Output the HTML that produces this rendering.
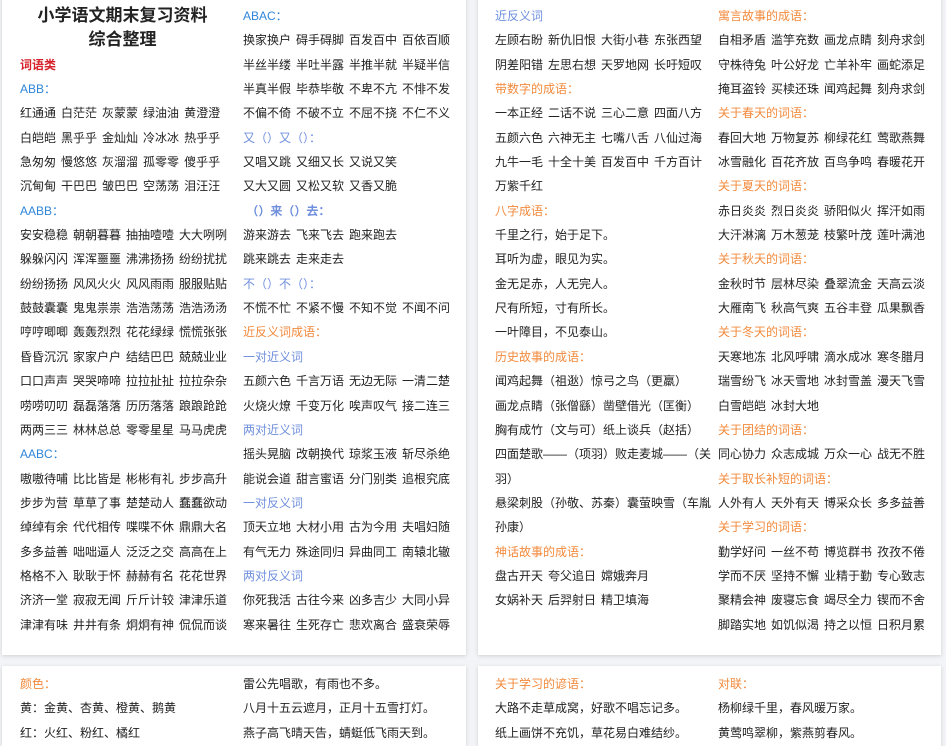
<!DOCTYPE html>
<html><head><meta charset="utf-8"><style>
body{margin:0;width:946px;height:732px;overflow:hidden;background:#f3f4f7;font-family:"Liberation Sans","Noto Sans CJK SC",sans-serif;font-size:12px;color:#222;position:relative}
.card{position:absolute;background:#fff;box-shadow:0 1px 4px rgba(0,0,0,.15)}
.col{position:absolute;line-height:24.35px;white-space:nowrap}
.col div{height:24.35px}
.col span{margin-right:5px}
.b{color:#2f86d8}
.v{color:#6f8fdc}
.o{color:#f28a3c}
.r{color:#d6222a;font-weight:bold}
.t{font-size:17px;font-weight:bold;text-align:center;width:205px}
</style></head><body>
<div class="card" style="left:2px;top:-4px;width:464px;height:659px"></div>
<div class="card" style="left:478px;top:-4px;width:463px;height:659px"></div>
<div class="card" style="left:2px;top:666px;width:464px;height:80px"></div>
<div class="card" style="left:478px;top:666px;width:463px;height:80px"></div>

<div class="col" style="left:20px;top:4px">
<div class="t">小学语文期末复习资料</div>
<div class="t">综合整理</div>
<div class="r">词语类</div>
<div class="b">ABB：</div>
<div><span>红通通</span><span>白茫茫</span><span>灰蒙蒙</span><span>绿油油</span><span>黄澄澄</span></div>
<div><span>白皑皑</span><span>黑乎乎</span><span>金灿灿</span><span>冷冰冰</span><span>热乎乎</span></div>
<div><span>急匆匆</span><span>慢悠悠</span><span>灰溜溜</span><span>孤零零</span><span>傻乎乎</span></div>
<div><span>沉甸甸</span><span>干巴巴</span><span>皱巴巴</span><span>空荡荡</span><span>泪汪汪</span></div>
<div class="b">AABB：</div>
<div><span>安安稳稳</span><span>朝朝暮暮</span><span>抽抽噎噎</span><span>大大咧咧</span></div>
<div><span>躲躲闪闪</span><span>浑浑噩噩</span><span>沸沸扬扬</span><span>纷纷扰扰</span></div>
<div><span>纷纷扬扬</span><span>风风火火</span><span>风风雨雨</span><span>服服贴贴</span></div>
<div><span>鼓鼓囊囊</span><span>鬼鬼祟祟</span><span>浩浩荡荡</span><span>浩浩汤汤</span></div>
<div><span>哼哼唧唧</span><span>轰轰烈烈</span><span>花花绿绿</span><span>慌慌张张</span></div>
<div><span>昏昏沉沉</span><span>家家户户</span><span>结结巴巴</span><span>兢兢业业</span></div>
<div><span>口口声声</span><span>哭哭啼啼</span><span>拉拉扯扯</span><span>拉拉杂杂</span></div>
<div><span>唠唠叨叨</span><span>磊磊落落</span><span>历历落落</span><span>踉踉跄跄</span></div>
<div><span>两两三三</span><span>林林总总</span><span>零零星星</span><span>马马虎虎</span></div>
<div class="b">AABC：</div>
<div><span>嗷嗷待哺</span><span>比比皆是</span><span>彬彬有礼</span><span>步步高升</span></div>
<div><span>步步为营</span><span>草草了事</span><span>楚楚动人</span><span>蠢蠢欲动</span></div>
<div><span>绰绰有余</span><span>代代相传</span><span>喋喋不休</span><span>鼎鼎大名</span></div>
<div><span>多多益善</span><span>咄咄逼人</span><span>泛泛之交</span><span>高高在上</span></div>
<div><span>格格不入</span><span>耿耿于怀</span><span>赫赫有名</span><span>花花世界</span></div>
<div><span>济济一堂</span><span>寂寂无闻</span><span>斤斤计较</span><span>津津乐道</span></div>
<div><span>津津有味</span><span>井井有条</span><span>炯炯有神</span><span>侃侃而谈</span></div>
</div>

<div class="col" style="left:243px;top:4px">
<div class="b">ABAC：</div>
<div><span>换家换户</span><span>碍手碍脚</span><span>百发百中</span><span>百依百顺</span></div>
<div><span>半丝半缕</span><span>半吐半露</span><span>半推半就</span><span>半疑半信</span></div>
<div><span>半真半假</span><span>毕恭毕敬</span><span>不卑不亢</span><span>不悱不发</span></div>
<div><span>不偏不倚</span><span>不破不立</span><span>不屈不挠</span><span>不仁不义</span></div>
<div class="v">又（）又（）：</div>
<div><span>又唱又跳</span><span>又细又长</span><span>又说又笑</span></div>
<div><span>又大又圆</span><span>又松又软</span><span>又香又脆</span></div>
<div class="v" style="font-weight:bold">&nbsp;（）来（）去：</div>
<div><span>游来游去</span><span>飞来飞去</span><span>跑来跑去</span></div>
<div><span>跳来跳去</span><span>走来走去</span></div>
<div class="v">不（）不（）：</div>
<div><span>不慌不忙</span><span>不紧不慢</span><span>不知不觉</span><span>不闻不问</span></div>
<div class="o">近反义词成语：</div>
<div class="v">一对近义词</div>
<div><span>五颜六色</span><span>千言万语</span><span>无边无际</span><span>一清二楚</span></div>
<div><span>火烧火燎</span><span>千变万化</span><span>唉声叹气</span><span>接二连三</span></div>
<div class="v">两对近义词</div>
<div><span>摇头晃脑</span><span>改朝换代</span><span>琼浆玉液</span><span>斩尽杀绝</span></div>
<div><span>能说会道</span><span>甜言蜜语</span><span>分门别类</span><span>追根究底</span></div>
<div class="v">一对反义词</div>
<div><span>顶天立地</span><span>大材小用</span><span>古为今用</span><span>夫唱妇随</span></div>
<div><span>有气无力</span><span>殊途同归</span><span>异曲同工</span><span>南辕北辙</span></div>
<div class="v">两对反义词</div>
<div><span>你死我活</span><span>古往今来</span><span>凶多吉少</span><span>大同小异</span></div>
<div><span>寒来暑往</span><span>生死存亡</span><span>悲欢离合</span><span>盛衰荣辱</span></div>
</div>

<div class="col" style="left:495px;top:4px">
<div class="v">近反义词</div>
<div><span>左顾右盼</span><span>新仇旧恨</span><span>大街小巷</span><span>东张西望</span></div>
<div><span>阴差阳错</span><span>左思右想</span><span>天罗地网</span><span>长吁短叹</span></div>
<div class="o">带数字的成语：</div>
<div><span>一本正经</span><span>二话不说</span><span>三心二意</span><span>四面八方</span></div>
<div><span>五颜六色</span><span>六神无主</span><span>七嘴八舌</span><span>八仙过海</span></div>
<div><span>九牛一毛</span><span>十全十美</span><span>百发百中</span><span>千方百计</span></div>
<div><span>万紫千红</span></div>
<div class="o">八字成语：</div>
<div>千里之行，始于足下。</div>
<div>耳听为虚，眼见为实。</div>
<div>金无足赤，人无完人。</div>
<div>尺有所短，寸有所长。</div>
<div>一叶障目，不见泰山。</div>
<div class="o">历史故事的成语：</div>
<div>闻鸡起舞（祖逖）惊弓之鸟（更羸）</div>
<div>画龙点睛（张僧繇）凿壁借光（匡衡）</div>
<div>胸有成竹（文与可）纸上谈兵（赵括）</div>
<div>四面楚歌——（项羽）败走麦城——（关</div>
<div>羽）</div>
<div>悬梁刺股（孙敬、苏秦）囊萤映雪（车胤</div>
<div>孙康）</div>
<div class="o">神话故事的成语：</div>
<div><span>盘古开天</span><span>夸父追日</span><span>嫦娥奔月</span></div>
<div><span>女娲补天</span><span>后羿射日</span><span>精卫填海</span></div>
</div>

<div class="col" style="left:718px;top:4px">
<div class="o">寓言故事的成语：</div>
<div><span>自相矛盾</span><span>滥竽充数</span><span>画龙点睛</span><span>刻舟求剑</span></div>
<div><span>守株待兔</span><span>叶公好龙</span><span>亡羊补牢</span><span>画蛇添足</span></div>
<div><span>掩耳盗铃</span><span>买椟还珠</span><span>闻鸡起舞</span><span>刻舟求剑</span></div>
<div class="o">关于春天的词语：</div>
<div><span>春回大地</span><span>万物复苏</span><span>柳绿花红</span><span>莺歌燕舞</span></div>
<div><span>冰雪融化</span><span>百花齐放</span><span>百鸟争鸣</span><span>春暖花开</span></div>
<div class="o">关于夏天的词语：</div>
<div><span>赤日炎炎</span><span>烈日炎炎</span><span>骄阳似火</span><span>挥汗如雨</span></div>
<div><span>大汗淋漓</span><span>万木葱茏</span><span>枝繁叶茂</span><span>莲叶满池</span></div>
<div class="o">关于秋天的词语：</div>
<div><span>金秋时节</span><span>层林尽染</span><span>叠翠流金</span><span>天高云淡</span></div>
<div><span>大雁南飞</span><span>秋高气爽</span><span>五谷丰登</span><span>瓜果飘香</span></div>
<div class="o">关于冬天的词语：</div>
<div><span>天寒地冻</span><span>北风呼啸</span><span>滴水成冰</span><span>寒冬腊月</span></div>
<div><span>瑞雪纷飞</span><span>冰天雪地</span><span>冰封雪盖</span><span>漫天飞雪</span></div>
<div><span>白雪皑皑</span><span>冰封大地</span></div>
<div class="o">关于团结的词语：</div>
<div><span>同心协力</span><span>众志成城</span><span>万众一心</span><span>战无不胜</span></div>
<div class="o">关于取长补短的词语：</div>
<div><span>人外有人</span><span>天外有天</span><span>博采众长</span><span>多多益善</span></div>
<div class="o">关于学习的词语：</div>
<div><span>勤学好问</span><span>一丝不苟</span><span>博览群书</span><span>孜孜不倦</span></div>
<div><span>学而不厌</span><span>坚持不懈</span><span>业精于勤</span><span>专心致志</span></div>
<div><span>聚精会神</span><span>废寝忘食</span><span>竭尽全力</span><span>锲而不舍</span></div>
<div><span>脚踏实地</span><span>如饥似渴</span><span>持之以恒</span><span>日积月累</span></div>
</div>

<div class="col" style="left:20px;top:672px">
<div class="o">颜色：</div>
<div>黄：金黄、杏黄、橙黄、鹅黄</div>
<div>红：火红、粉红、橘红</div>
</div>
<div class="col" style="left:243px;top:672px">
<div>雷公先唱歌，有雨也不多。</div>
<div>八月十五云遮月，正月十五雪打灯。</div>
<div>燕子高飞晴天告，蜻蜓低飞雨天到。</div>
</div>
<div class="col" style="left:495px;top:672px">
<div class="o">关于学习的谚语：</div>
<div>大路不走草成窝，好歌不唱忘记多。</div>
<div>纸上画饼不充饥，草花易白难结纱。</div>
</div>
<div class="col" style="left:718px;top:672px">
<div class="o">对联：</div>
<div>杨柳绿千里，春风暖万家。</div>
<div>黄莺鸣翠柳，紫燕剪春风。</div>
</div>
</body></html>
